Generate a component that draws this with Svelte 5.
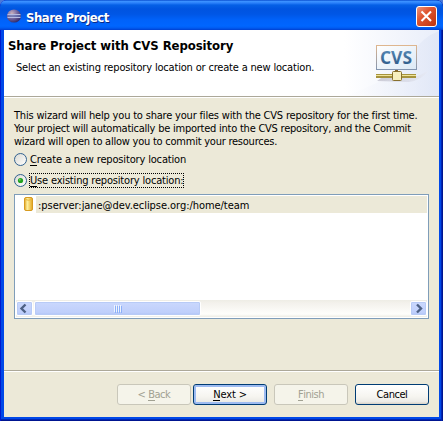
<script>
  const intro = [
    ['This wizard will help you to share your files with the CVS repository for the first time.', 'l1'],
    ['Your project will automatically be imported into the CVS repository, and the Commit', 'l2'],
    ['wizard will open to allow you to commit your resources.', 'l3']
  ];
  let choice = $state('existing');
</script>

<div class="window">
  <div class="titlebar">
    <svg class="orb" width="16" height="16" viewBox="0 0 16 16">
      <defs>
        <radialGradient id="orb" cx=".35" cy=".3" r=".75">
          <stop offset="0" stop-color="#c9b2bd" />
          <stop offset=".45" stop-color="#7d70a6" />
          <stop offset="1" stop-color="#2f2768" />
        </radialGradient>
      </defs>
      <ellipse cx="7" cy="8" rx="7" ry="6.6" fill="url(#orb)" />
      <path d="M.5 6.500h13M.5 9.500h13" stroke="#b6bbe2" />
      <path d="M1 8h13" stroke="#5873b8" />
    </svg>
    <span class="caption">Share Project</span>
    <button class="close" aria-label="Close">
      <svg width="21" height="21" viewBox="0 0 21 21">
        <defs>
          <linearGradient id="red" x1="0" y1="0" x2="1" y2="1">
            <stop offset="0" stop-color="#ee9880" />
            <stop offset=".4" stop-color="#df5530" />
            <stop offset="1" stop-color="#bd320c" />
          </linearGradient>
        </defs>
        <rect x=".5" y=".5" width="20" height="20" rx="2.5" fill="url(#red)" stroke="#fff" />
        <path d="M5.5 5.5l9.5 9.5M15 5.5L5.5 15" stroke="#fff" stroke-width="2.1" />
      </svg>
    </button>
  </div>

  <div class="client">
    <div class="header">
      <svg class="banner" width="95" height="66" viewBox="0 0 95 66">
        <defs>
          <linearGradient id="wash" x1="0" y1="0" x2="1" y2="0">
            <stop offset="0" stop-color="#fff" />
            <stop offset="1" stop-color="#e9eefa" />
          </linearGradient>
          <linearGradient id="swoosh" x1="0" y1="0" x2="1" y2="0">
            <stop offset="0" stop-color="#fff" />
            <stop offset="1" stop-color="#dce3f5" />
          </linearGradient>
          <linearGradient id="panel" x1="0" y1="0" x2="1" y2="1">
            <stop offset="0" stop-color="#fff" />
            <stop offset="1" stop-color="#dce9f6" />
          </linearGradient>
          <linearGradient id="frame" x1="0" y1="0" x2="0" y2="1">
            <stop offset="0" stop-color="#deb68f" />
            <stop offset="1" stop-color="#8395b0" />
          </linearGradient>
          <linearGradient id="ink" x1="0" y1="0" x2="0" y2="1">
            <stop offset="0" stop-color="#6093c0" />
            <stop offset="1" stop-color="#24507f" />
          </linearGradient>
          <linearGradient id="shade" x1="0" y1="0" x2="1" y2="0">
            <stop offset="0" stop-color="#aaa8b8" />
            <stop offset="1" stop-color="#e8eaf3" />
          </linearGradient>
        </defs>
        <rect width="95" height="66" fill="url(#wash)" />
        <path d="M0 66Q50 50 68 24Q78 7 95 1V66Z" fill="url(#swoosh)" opacity=".65" />
        <path d="M33 51L40 46H74L84 41Q78 50 65 52Z" fill="url(#shade)" opacity=".55" />
        <rect x="32.500" y="15.500" width="40" height="24" fill="url(#panel)" stroke="url(#frame)" />
        <text x="36" y="34" textLength="32" lengthAdjust="spacingAndGlyphs" fill="url(#ink)" class="cvs">CVS</text>
        <path d="M52.500 40v4" stroke="#84662b" stroke-width="3" />
        <rect x="32" y="44" width="40" height="4" fill="#a6933e" />
        <path d="M32 45.500h40" stroke="#efe49a" />
        <rect x="48.500" y="41.500" width="9" height="9" rx="1" fill="#f7efbe" stroke="#88702e" />
      </svg>
      <div class="heading">Share Project with CVS Repository</div>
      <div class="sub">Select an existing repository location or create a new location.</div>
    </div>

    <div class="body">
      <div class="intro">
        {#each intro as [line, cls]}
          <div class={cls}>{line}</div>
        {/each}
      </div>

      {#snippet radio(value, key, rest)}
        <button class="radio {value}" role="radio" aria-checked={choice === value} onclick={() => (choice = value)}>
          <svg width="13" height="13" viewBox="0 0 13 13">
            <defs>
              <linearGradient id={'dish-' + value} x1="0" y1="0" x2="1" y2="1">
                <stop offset="0" stop-color="#d9d9d2" />
                <stop offset="1" stop-color="#fff" />
              </linearGradient>
            </defs>
            <circle cx="6.500" cy="6.500" r="6" fill={'url(#dish-' + value + ')'} stroke="#31618f" />
            {#if choice === value}
              <circle cx="6.500" cy="6.500" r="2.600" fill="#21a121" />
              <circle cx="5.800" cy="5.800" r="1" fill="#62d35d" />
            {/if}
          </svg>
          <span class="label" class:focus={choice === value}><u>{key}</u>{rest}</span>
        </button>
      {/snippet}
      {@render radio('create', 'C', 'reate a new repository location')}
      {@render radio('existing', 'U', 'se existing repository location:')}

      <div class="list">
        <div class="item">
          <svg width="20" height="17" viewBox="0 0 20 17">
            <defs>
              <linearGradient id="gold" x1="0" y1="0" x2="1" y2="0">
                <stop offset="0" stop-color="#dfa321" />
                <stop offset=".35" stop-color="#fff1a0" />
                <stop offset="1" stop-color="#e2a51c" />
              </linearGradient>
            </defs>
            <path d="M8.500 3Q8.500 1.500 10 1.500h5Q16.500 1.500 16.500 3v10Q16.500 14.500 15 14.500h-5Q8.500 14.500 8.500 13Z" fill="url(#gold)" stroke="#d79b20" />
            <path d="M9.500 3.500q3 1.500 6 0" fill="none" stroke="#e7b43a" />
          </svg>
          <span class="path">:pserver:jane@dev.eclipse.org:/home/team</span>
        </div>
        <div class="scrollbar">
          <div class="arrow"><svg width="15" height="15" viewBox="0 0 15 15"><path d="M8.500 3.500l-4 4 4 4" /></svg></div>
          <div class="thumb"><i></i><i></i><i></i><i></i></div>
          <div class="arrow end"><svg width="15" height="15" viewBox="0 0 15 15"><path d="M6 3.500l4 4-4 4" /></svg></div>
        </div>
      </div>
    </div>

    <div class="footer">
      <button class="btn" disabled><span class="back">&lt; <u>B</u>ack</span></button>
      <button class="btn default"><span class="next"><u>N</u>ext &gt;</span></button>
      <button class="btn finish" disabled><span class="fin"><u>F</u>inish</span></button>
      <button class="btn"><span class="can">Cancel</span></button>
    </div>
  </div>
</div>

<style>
  :global(body) { background: #4a78d8; }
  * { box-sizing: border-box; }
  .window {
    width: 443px; height: 421px;
    display: flex; flex-direction: column;
    padding: 0 4px 4px;
    border-radius: 7px 7px 0 0;
    overflow: hidden;
    background: #0048e8;
    box-shadow: inset 1px 0 #0019cf, inset -1px 0 #001590, inset -2px 0 #0026b5, inset 0 -1px #001590, inset 0 -2px #0026b5;
    font: 11px/13px "DejaVu Sans Condensed", "DejaVu Sans", sans-serif;
    font-stretch: condensed;
    color: #000;
    white-space: nowrap;
  }
  button { font: inherit; color: inherit; border: 0; padding: 0; background: none; }
  svg { display: block; flex: none; }
  u { text-decoration: none; box-shadow: 0 1px currentColor; display: inline-block; height: 12px; line-height: 13px; }
  .titlebar {
    height: 30px; flex: none;
    margin: 0 -4px; padding: 1px 6px 0 7px;
    display: flex; align-items: center;
    background: linear-gradient(#0a4fd0 0, #3a90ff 1.5px, #2a80fa 3px, #0560e6 5px, #0054e0 9px, #0056e5 14px, #0062fa 20px, #0066ff 26px, #005bf2 28px, #003fd0 30px);
  }
  .caption {
    font-size: 13px; line-height: 16px; font-weight: bold; color: #fff;
    text-shadow: 1px 1px #0b2a86;
    margin-left: 3px; margin-top: 4px; flex: 1;
    letter-spacing: -0.5px;
  }
  .close { height: 21px; margin-top: 1px; }
  .client { flex: 1; display: flex; flex-direction: column; background: #ece9d8; }
  .header {
    height: 66px; flex: none; background: #fff;
    display: grid; grid-template-columns: 1fr 95px; grid-template-rows: 24px 1fr;
    overflow: hidden;
  }
  .banner { grid-column: 2; grid-row: 1 / 3; }
  .heading {
    grid-column: 1; grid-row: 1; padding: 8px 0 0 4px;
    font-size: 13px; line-height: 16px; font-weight: bold; letter-spacing: -0.07px;
  }
  .sub { grid-column: 1; grid-row: 2; padding: 7px 0 0 12px; letter-spacing: -0.18px; }
  .cvs { font: bold 17px "Open Sans", "Noto Sans", sans-serif; }
  .body {
    height: 274px; flex: none; padding: 11px 10px 0;
    border-top: 1px solid #aca899; box-shadow: inset 0 1px #fff;
  }
  .intro { height: 40px; padding-top: 1px; }
  .l1 { letter-spacing: -0.19px; }
  .l2, .l3 { letter-spacing: -0.235px; }
  .radio { display: flex; align-items: center; height: 15px; margin-top: 4px; }
  .radio.existing { margin-top: 6px; }
  .label { margin-left: 2px; padding: 0 1px; height: 15px; line-height: 15px; letter-spacing: -0.16px; }
  .label u { height: 13px; line-height: 15px; }
  .existing .label { letter-spacing: -0.18px; }
  .focus { outline: 1px dotted #000; outline-offset: -1px; }
  .list {
    height: 125px; width: 415px; margin-top: 6px; padding: 1px;
    border: 1px solid #7f9db9; background: #fff;
    display: flex; flex-direction: column; justify-content: space-between;
  }
  .item { display: flex; height: 17px; }
  .path { flex: 1; background: #ece9d8; padding: 3px 0 0 2px; letter-spacing: -0.05px; }
  .scrollbar {
    height: 17px; display: flex; padding: 1px 0;
    background: linear-gradient(#eeede5, #f3f1ec 3px, #fefefb 14px, #eeede5);
  }
  .arrow, .thumb {
    height: 15px; border: 1px solid #fff; border-radius: 2px;
    background: linear-gradient(#cad8fd, #bfcffb 80%, #afc3f6);
    box-shadow: inset 0 0 0 1px #b8cbf6;
  }
  .arrow { width: 17px; }
  .arrow svg { margin-top: -1px; }
  .arrow path { fill: none; stroke: #4d6185; stroke-width: 2.4; }
  .end { margin-left: auto; }
  .thumb { width: 167px; margin-left: 1px; display: flex; justify-content: center; align-items: center; gap: 1px; }
  .thumb i { width: 1px; height: 7px; background: #eef4fe; box-shadow: 1px 1px #8cb0f8; }
  .footer {
    flex: 1; display: flex; padding: 13px 10px 0 113px; gap: 2px;
    border-top: 1px solid #aca899; box-shadow: inset 0 1px #fff;
  }
  .btn {
    width: 74px; height: 21px; flex: none;
    border: 1px solid #003c74; border-radius: 3px;
    background: linear-gradient(#fff, #f6f5f0 60%, #ecebe6 88%, #d6d0c5);
    display: flex; align-items: center; justify-content: center;
  }
  .btn:disabled { border-color: #c9c7ba; background: #f5f4ea; color: #a1a192; }
  .default { box-shadow: inset 0 0 0 2px #9dbbf1, inset 0 -2px #6982ee; }
  .finish { margin: 0 5px; }
  .back, .fin, .can { letter-spacing: -0.45px; }
  .next { letter-spacing: -0.15px; }
</style>
